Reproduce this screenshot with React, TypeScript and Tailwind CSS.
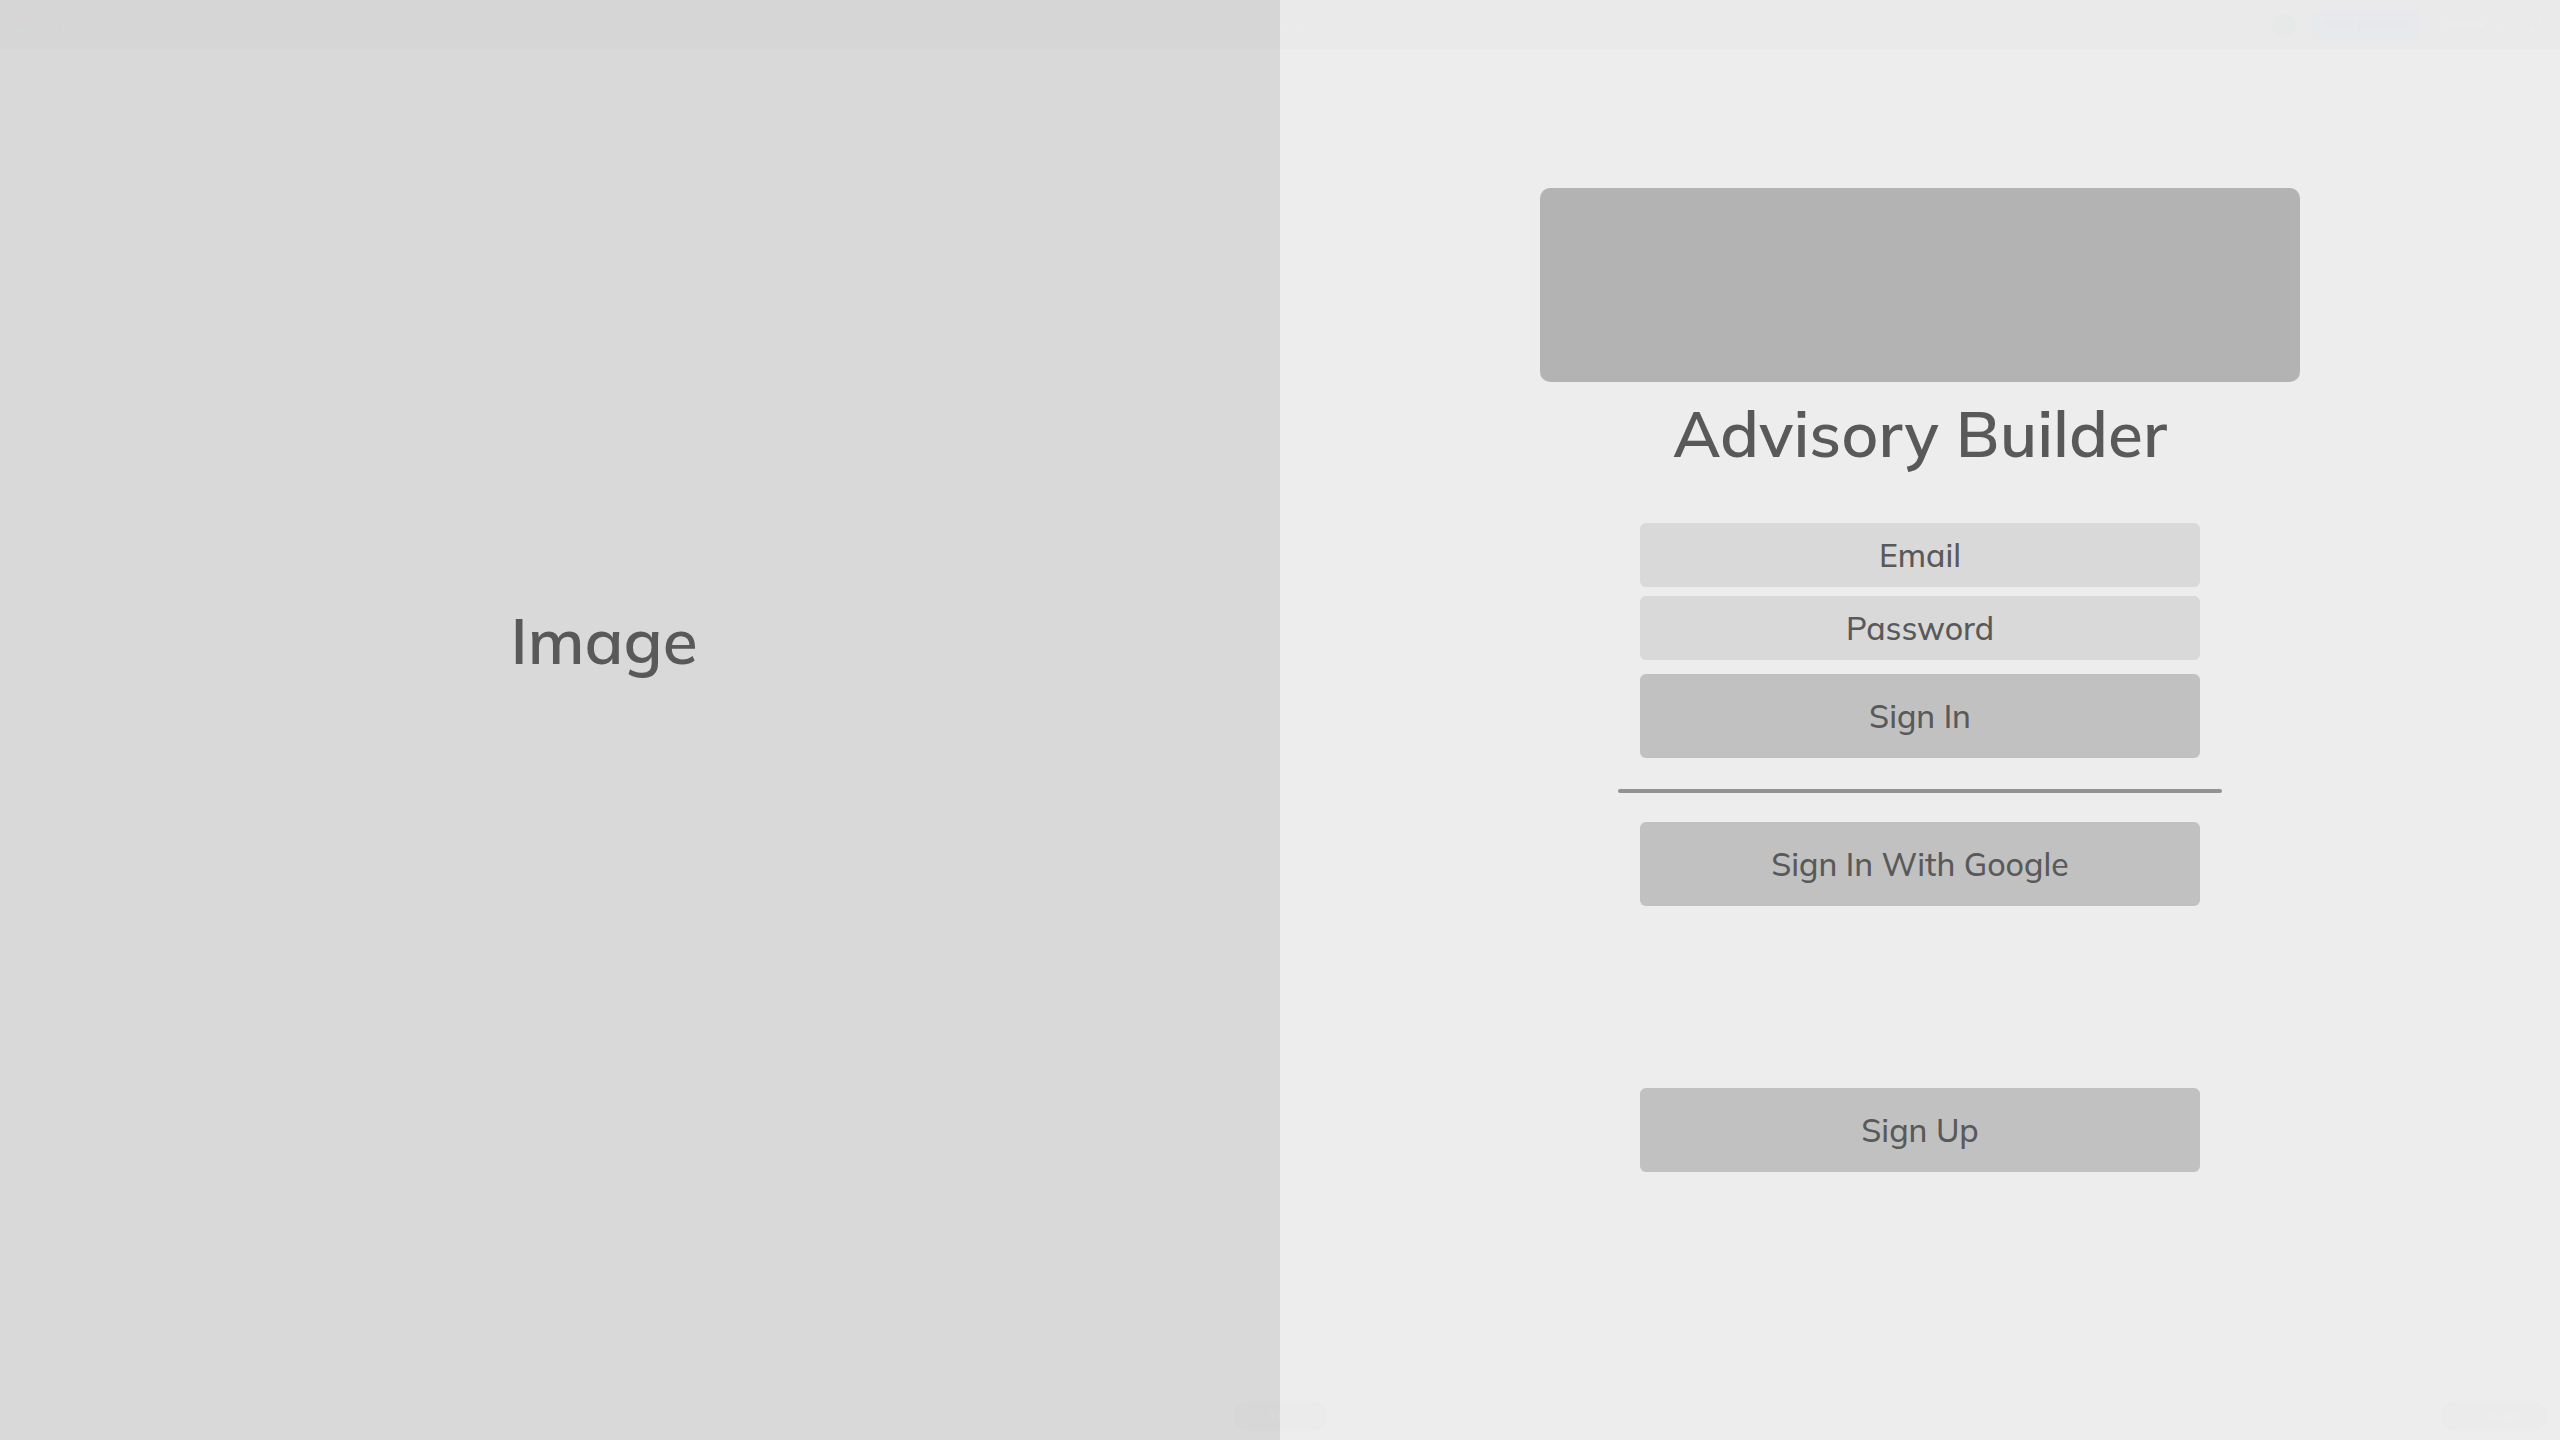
import { useState } from "react";
import { ChevronDown, ChevronRight, Maximize2, MessageCircle, Undo2 } from "lucide-react";

const fieldClass =
  "h-16 w-full rounded-md bg-[#d9d9d9] text-center text-[32px] leading-10 font-medium text-[#595959] placeholder:text-[#595959] placeholder:opacity-100 outline-none";
const buttonClass =
  "h-21 w-full rounded-md bg-[#c1c1c1] text-center text-[32px] leading-10 font-medium text-[#595959]";

function FigmaMark() {
  return (
    <svg width="12" height="18" viewBox="0 0 12 18" aria-hidden="true">
      <path d="M3 0h3v6H3a3 3 0 0 1 0-6Z" fill="#d8d5d4" />
      <path d="M6 0h3a3 3 0 0 1 0 6H6Z" fill="#dad5d5" />
      <path d="M3 6h3v6H3a3 3 0 0 1 0-6Z" fill="#d7d5d8" />
      <circle cx="9" cy="9" r="3" fill="#d4d7d9" />
      <path d="M3 12h3v3a3 3 0 1 1-3-3Z" fill="#d4d8d6" />
    </svg>
  );
}

function TopBar() {
  return (
    <header className="absolute inset-x-0 top-0 grid h-[49px] grid-cols-3 items-center bg-black/[0.013] font-['Inter',sans-serif]">
      <div className="flex items-center gap-8 pl-[18px] text-white/8">
        <button aria-label="Figma">
          <FigmaMark />
        </button>
        <button aria-label="Comments">
          <MessageCircle size={18} strokeWidth={1.5} />
        </button>
      </div>
      <button className="flex items-center justify-center gap-3 text-sm text-white/6">
        Advisory Generator
        <ChevronDown size={8} />
      </button>
      <div className="flex items-center justify-end pr-4 text-[11px]">
        <span className="mr-4 flex size-6 items-center justify-center rounded-full bg-[#e6e9e7] text-white/15">
          C
        </span>
        <button className="h-[30px] w-[108px] rounded-md bg-[#e7e9ec] text-[#e5e7ea]">
          Share prototype
        </button>
        <button className="ml-6 flex items-center gap-2 text-white/20">
          Options
          <ChevronDown size={8} />
        </button>
        <button aria-label="Full screen" className="ml-7 text-white/25">
          <Maximize2 size={16} strokeWidth={1} />
        </button>
      </div>
    </header>
  );
}

function Controls() {
  return (
    <div className="absolute inset-x-0 bottom-[9px] grid grid-cols-3 items-center px-3 font-['Inter',sans-serif] text-[11px] text-white/10">
      <span />
      <div className="flex h-[30px] w-[94px] items-center justify-end gap-4 justify-self-center rounded-full bg-black/[0.008] pr-1">
        <span>1 / 6</span>
        <button aria-label="Next screen">
          <ChevronRight size={16} strokeWidth={1} />
        </button>
      </div>
      <button className="flex h-[30px] w-[108px] items-center gap-3 justify-self-end rounded-full bg-black/[0.008] pl-5">
        <Undo2 size={12} strokeWidth={1} />
        Restart
      </button>
    </div>
  );
}

export default function App() {
  const [email, setEmail] = useState("");
  const [password, setPassword] = useState("");

  return (
    <div className="relative grid min-h-screen grid-cols-2 bg-[#ededed] font-['Mulish','Nunito','Lato',sans-serif] text-[#595959]">
      <section className="flex justify-center bg-[#d9d9d9] pt-[600px] pr-18">
        <h2 className="h-20 text-[64px] leading-20 font-semibold">Image</h2>
      </section>

      <main className="flex flex-col items-center pt-47">
        <div className="h-[194px] w-[760px] rounded-[10px] bg-[#b3b3b3]" />
        <h1 className="mt-[11px] text-[64px] leading-20 font-semibold">Advisory Builder</h1>

        <form className="mt-[50px] flex w-140 flex-col" onSubmit={(e) => e.preventDefault()}>
          <input
            type="email"
            aria-label="Email"
            placeholder="Email"
            value={email}
            onChange={(e) => setEmail(e.target.value)}
            className={fieldClass}
          />
          <input
            type="password"
            aria-label="Password"
            placeholder="Password"
            value={password}
            onChange={(e) => setPassword(e.target.value)}
            className={`mt-[9px] ${fieldClass}`}
          />
          <button type="submit" className={`mt-[14px] ${buttonClass}`}>
            Sign In
          </button>
        </form>

        <hr className="mt-[31px] h-1 w-[604px] rounded-full border-0 bg-[#929292]" />

        <div className="mt-[29px] flex w-140 flex-col gap-[182px]">
          <button className={buttonClass}>Sign In With Google</button>
          <button className={buttonClass}>Sign Up</button>
        </div>
      </main>

      <TopBar />
      <Controls />
    </div>
  );
}
